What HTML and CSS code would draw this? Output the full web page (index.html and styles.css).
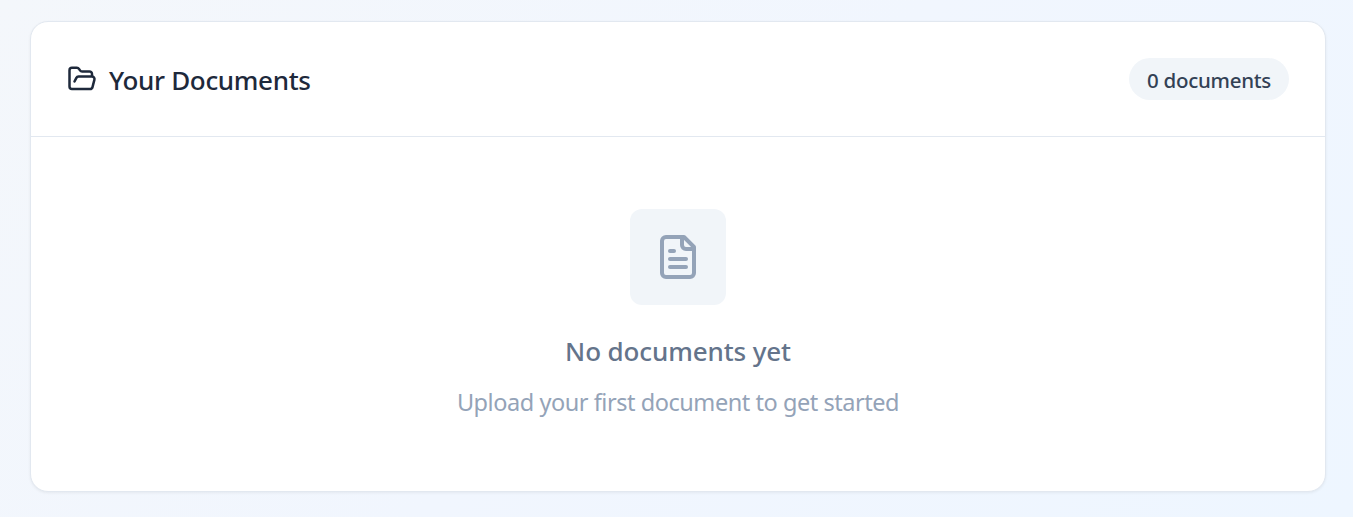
FILE: index.html
```html
<!DOCTYPE html>
<html lang="en">
<head>
<meta charset="utf-8">
<title>Your Documents</title>
<link rel="stylesheet" href="styles.css">
</head>
<body>
<section class="card">
  <header class="card-header">
    <h2 class="card-title">
      <svg class="folder-icon" viewBox="0 0 24 24"><path d="m6 14 1.5-2.9A2 2 0 0 1 9.24 10H20a2 2 0 0 1 1.94 2.5l-1.54 6a2 2 0 0 1-1.95 1.5H4a2 2 0 0 1-2-2V5a2 2 0 0 1 2-2h3.9a2 2 0 0 1 1.69.9l.81 1.2a2 2 0 0 0 1.67.9H18a2 2 0 0 1 2 2v2"/></svg>
      <span class="title-text">Your Documents</span>
    </h2>
    <span class="badge"><span class="badge-text">0 documents</span></span>
  </header>
  <div class="empty">
    <div class="empty-tile">
      <svg class="file-icon" viewBox="0 0 24 24"><path d="M15 2H6a2 2 0 0 0-2 2v16a2 2 0 0 0 2 2h12a2 2 0 0 0 2-2V7Z"/><path d="M14 2v4a2 2 0 0 0 2 2h4"/><path d="M10 9H8"/><path d="M16 13H8"/><path d="M16 17H8"/></svg>
    </div>
    <h3 class="empty-title">No documents yet</h3>
    <p class="empty-text">Upload your first document to get started</p>
  </div>
</section>
</body>
</html>
```

FILE: styles.css
```css
* { box-sizing: border-box; }
body {
  margin: 0;
  height: 517px;
  padding: 21px 27px 25px 30px;
  overflow: hidden;
  background: linear-gradient(135deg, #f4f7fb 0%, #f1f6fe 50%, #eef6ff 100%);
  font-family: "Segoe UI", "Noto Sans", "Open Sans", sans-serif;
}
.card {
  height: 471px;
  background: #fff;
  border: 1px solid #e2e8f0;
  border-radius: 18px;
  box-shadow: 0 1px 3px rgba(0, 0, 0, 0.06);
}
.card-header {
  display: flex;
  align-items: center;
  justify-content: space-between;
  height: 115px;
  padding: 0 36px;
  border-bottom: 1px solid #e2e8f0;
}
.card-title {
  display: flex;
  align-items: center;
  gap: 12px;
  margin: 0;
  color: #1e293b;
  font-size: 26px;
  font-weight: 500;
  line-height: 36px;
  letter-spacing: -0.33px;
}
svg {
  display: block;
  fill: none;
  stroke: currentColor;
  stroke-width: 2;
  stroke-linecap: round;
  stroke-linejoin: round;
}
.folder-icon { width: 30px; height: 30px; }
.title-text { padding-top: 2px; }
.badge {
  display: flex;
  align-items: center;
  justify-content: center;
  width: 160px;
  height: 42px;
  border-radius: 21px;
  background: #f1f5f9;
  color: #334155;
  font-size: 20.5px;
  font-weight: 500;
  letter-spacing: -0.28px;
}
.badge-text { padding-top: 2px; }
.empty {
  display: flex;
  flex-direction: column;
  align-items: center;
  padding-top: 72px;
}
.empty-tile {
  display: grid;
  place-items: center;
  width: 96px;
  height: 96px;
  border-radius: 12px;
  background: #f1f5f9;
  color: #94a3b8;
}
.file-icon { width: 48px; height: 48px; }
.empty-title {
  margin: 28px 0 0;
  color: #64748b;
  font-size: 26px;
  font-weight: 500;
  line-height: 36px;
  letter-spacing: -0.12px;
}
.empty-text {
  margin: 15px 0 0;
  color: #94a3b8;
  font-size: 23.5px;
  line-height: 36px;
  letter-spacing: -0.45px;
}
```
